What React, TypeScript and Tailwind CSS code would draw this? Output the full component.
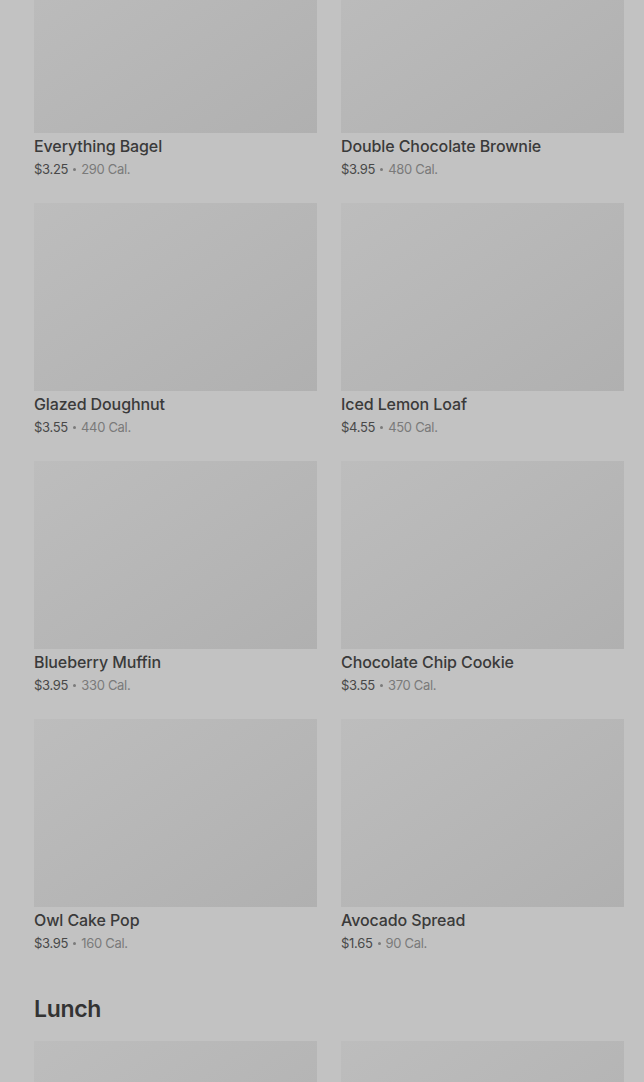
const breakfast = [
  { name: "Everything Bagel", price: "$3.25", cal: "290 Cal." },
  { name: "Double Chocolate Brownie", price: "$3.95", cal: "480 Cal." },
  { name: "Glazed Doughnut", price: "$3.55", cal: "440 Cal." },
  { name: "Iced Lemon Loaf", price: "$4.55", cal: "450 Cal." },
  { name: "Blueberry Muffin", price: "$3.95", cal: "330 Cal." },
  { name: "Chocolate Chip Cookie", price: "$3.55", cal: "370 Cal." },
  { name: "Owl Cake Pop", price: "$3.95", cal: "160 Cal." },
  { name: "Avocado Spread", price: "$1.65", cal: "90 Cal." },
];

type Item = { name: string; price: string; cal: string };

function MenuCard({ item }: { item: Item }) {
  return (
    <div className="flex flex-col">
      <div className="h-[188px] w-full bg-linear-to-br from-[#bdbdbd] to-[#b0b0b0]" />
      <div className="mt-[3px] h-5 text-base font-medium leading-5 tracking-[-0.1px] text-[#3a3a3a]">
        {item.name}
      </div>
      <div className="mt-[3px] flex h-5 items-center gap-[5px] text-[13px] leading-5 tracking-[-0.3px]">
        <span className="text-[#484848]">{item.price}</span>
        <span className="size-[3px] rounded-full bg-[#7a7a7a]" />
        <span className="text-[#7a7a7a]">{item.cal}</span>
      </div>
    </div>
  );
}

export default function App() {
  return (
    <div
      className="h-[1082px] overflow-hidden bg-[#c2c2c2] pl-[34px] pr-[20px]"
      style={{ fontFamily: "Inter, 'Noto Sans', sans-serif" }}
    >
      <div className="-mt-[55px] grid grid-cols-2 gap-x-6 gap-y-6">
        {breakfast.map((item) => (
          <MenuCard key={item.name} item={item} />
        ))}
      </div>
      <h2 className="mt-10 mb-4 h-8 text-[23px] font-semibold leading-8 tracking-[-0.3px] text-[#333333]">
        Lunch
      </h2>
      <div className="grid grid-cols-2 gap-x-6">
        <div className="h-[188px] bg-linear-to-br from-[#bdbdbd] to-[#b0b0b0]" />
        <div className="h-[188px] bg-linear-to-br from-[#bdbdbd] to-[#b0b0b0]" />
      </div>
    </div>
  );
}
